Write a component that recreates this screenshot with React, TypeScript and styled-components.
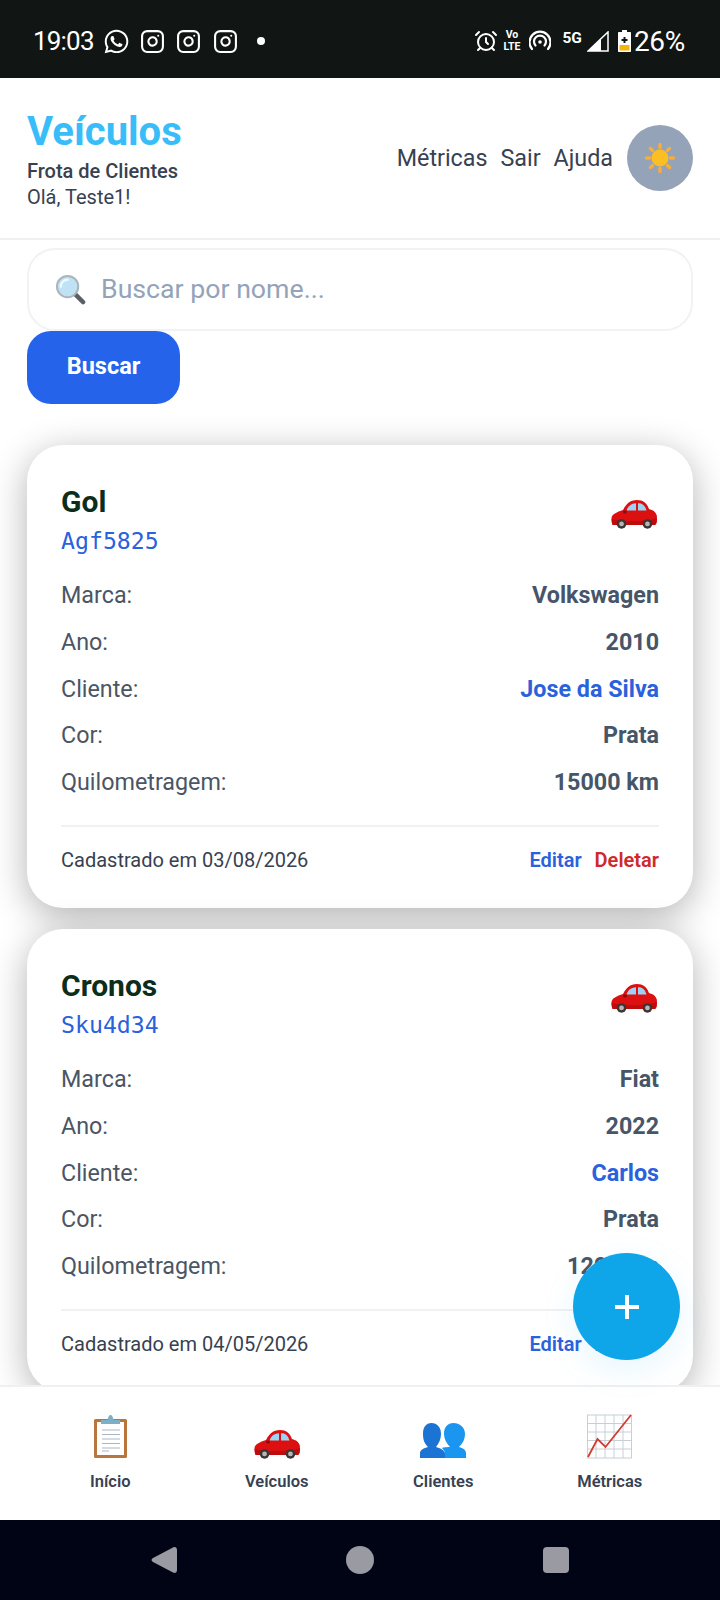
import React from 'react';
import styled, { createGlobalStyle } from 'styled-components';
import { FaWhatsapp } from 'react-icons/fa';
import { AlarmClock, Instagram } from 'lucide-react';

const GlobalStyle = createGlobalStyle`
    html, body {
        margin: 0;
        padding: 0;
        background: #fff;
        font-family: 'Roboto', 'Liberation Sans', sans-serif;
    }
    * { box-sizing: border-box; }
`;

const Screen = styled.div`
    position: relative;
    width: 720px;
    height: 1600px;
    display: flex;
    flex-direction: column;
    overflow: hidden;
    background: #fff;
`;

// Android status bar
const StatusBar = styled.div`
    height: 78px;
    flex: none;
    background: #111614;
    color: #fff;
    display: flex;
    align-items: center;
    justify-content: space-between;
    padding: 4px 35px 0 33px;
`;

const StatusGroup = styled.div`
    display: flex;
    align-items: center;
`;

// spacing for the status icons, which sit at uneven distances
const StatusSlot = styled.span<{ $left: number }>`
    display: flex;
    align-items: center;
    margin-left: ${(p) => p.$left}px;
`;

const Clock = styled.span`
    font-size: 26px;
    font-weight: 400;
    letter-spacing: -0.8px;
`;

const Dot = styled.span`
    width: 8px;
    height: 8px;
    margin-left: 19px;
    border-radius: 50%;
    background: #fff;
`;

const VoLte = styled.span`
    display: flex;
    flex-direction: column;
    align-items: center;
    font-size: 10.5px;
    font-weight: 700;
    line-height: 12.4px;
`;

const FiveG = styled.span`
    font-size: 15.5px;
    font-weight: 700;
    margin-top: -7px;
`;

const Percent = styled.span`
    font-size: 28px;
    font-weight: 400;
    letter-spacing: -0.3px;
`;

// App header
const Header = styled.header`
    height: 162px;
    flex: none;
    display: flex;
    align-items: center;
    justify-content: space-between;
    padding: 0 27px 0 27px;
    border-bottom: 2px solid #eef0f2;
`;

const Brand = styled.div`
    display: flex;
    flex-direction: column;
    margin-top: 4px;
`;

const BrandTitle = styled.h1`
    margin: 0;
    font-size: 40px;
    line-height: 46px;
    font-weight: 700;
    color: #38bdf8;
`;

const BrandSubtitle = styled.div`
    margin-top: 3px;
    font-size: 20px;
    line-height: 26px;
    font-weight: 500;
    color: #374151;
`;

const Greeting = styled.div`
    font-size: 20px;
    line-height: 27px;
    color: #374151;
`;

const HeaderNav = styled.nav`
    display: flex;
    align-items: center;
    gap: 13px;
`;

const HeaderLink = styled.a`
    font-size: 23.3px;
    color: #374151;
`;

const ThemeToggle = styled.div`
    width: 66px;
    height: 66px;
    margin-left: 1px;
    border-radius: 50%;
    background: #94a3b8;
    display: flex;
    align-items: center;
    justify-content: center;
`;

// Scrolling content
const Content = styled.main`
    flex: 1;
    min-height: 0;
    overflow: hidden;
    padding: 8px 27px 0;
`;

const SearchBox = styled.div`
    height: 83px;
    display: flex;
    align-items: center;
    gap: 15px;
    padding: 0 26px;
    border: 2px solid #f0f2f5;
    border-radius: 28px;
    background: #fff;
`;

const Placeholder = styled.span`
    font-size: 26.7px;
    color: #94a3b8;
    margin-bottom: 2px;
`;

const SearchButton = styled.button`
    display: block;
    width: 153px;
    height: 73px;
    padding: 0 0 3px;
    border: none;
    border-radius: 24px;
    background: #2563eb;
    color: #fff;
    font-family: inherit;
    font-size: 23.5px;
    font-weight: 700;
`;

const CardList = styled.div`
    margin-top: 41px;
    display: flex;
    flex-direction: column;
    gap: 21px;
`;

const Card = styled.article`
    height: 463px;
    flex: none;
    padding: 36px 34px 0;
    border-radius: 36px;
    background: #fff;
    box-shadow: 0 8px 36px rgba(0, 0, 0, 0.3);
`;

const CardTop = styled.div`
    display: flex;
    justify-content: space-between;
    align-items: flex-start;
    height: 91px;
`;

const CardTitle = styled.h2`
    margin: 0;
    font-size: 30px;
    line-height: 42px;
    font-weight: 700;
    color: #0b2d1a;
`;

const Plate = styled.div`
    font-family: 'DejaVu Sans Mono', 'Liberation Mono', monospace;
    font-size: 23.2px;
    line-height: 36px;
    color: #2a61dc;
`;

const CarSlot = styled.div`
    margin: 18px 2px 0 0;
    display: flex;
`;

const Row = styled.div`
    height: 46.7px;
    display: flex;
    align-items: center;
    justify-content: space-between;
    font-size: 23.3px;
    color: #4b5563;
`;

const RowValue = styled.span<{ $link?: boolean }>`
    font-weight: 700;
    color: ${(p) => (p.$link ? '#2a61dc' : '#475569')};
`;

const CardFooter = styled.div`
    margin-top: 20px;
    padding-top: 16px;
    border-top: 2px solid #f0f1f3;
    display: flex;
    align-items: center;
    justify-content: space-between;
    font-size: 20px;
    line-height: 34px;
    color: #374151;
`;

const Actions = styled.div`
    display: flex;
    gap: 13px;
`;

const ActionLink = styled.a<{ $danger?: boolean }>`
    font-size: 20px;
    font-weight: 600;
    color: ${(p) => (p.$danger ? '#cf2a2a' : '#2a61dc')};
`;

// Floating add button
const Fab = styled.button`
    position: absolute;
    left: 573px;
    top: 1253px;
    width: 107px;
    height: 107px;
    padding: 0;
    border: none;
    border-radius: 50%;
    background: #0ea5e9;
    box-shadow: 0 10px 34px rgba(14, 165, 233, 0.1);
    display: flex;
    align-items: center;
    justify-content: center;
`;

// Bottom tabs
const BottomNav = styled.nav`
    height: 135px;
    flex: none;
    display: grid;
    grid-template-columns: repeat(4, 1fr);
    padding: 0 27px;
    background: #fff;
    border-top: 2px solid #eef0f2;
`;

const Tab = styled.div`
    display: flex;
    flex-direction: column;
    align-items: center;
`;

const TabIcon = styled.div`
    height: 46px;
    margin-top: 26px;
    display: flex;
    align-items: flex-end;
`;

const TabLabel = styled.span`
    margin-top: 13px;
    font-size: 16.5px;
    line-height: 20px;
    font-weight: 600;
    color: #374151;
`;

// Android navigation keys
const SystemBar = styled.div`
    height: 80px;
    flex: none;
    background: #010414;
    display: flex;
    align-items: center;
    justify-content: space-between;
    padding: 0 151px;
`;

const HomeKey = styled.div`
    width: 28px;
    height: 28px;
    border-radius: 50%;
    background: #9a9aa2;
`;

const RecentKey = styled.div`
    width: 26px;
    height: 26px;
    border-radius: 4px;
    background: #9a9aa2;
`;

const CarIcon = ({ width = 46 }: { width?: number }) => (
    <svg width={width} height={width * 0.65} viewBox="0 0 46 30">
        <path d="M1 25C0 20 0 17 3 15C6 13 9 12 12 11C15 5 19 1 26 1C32 1 36 4 38 10C42 11 45 13 46 17C46 21 46 25 44 26H3C2 26 1.300 26 1 25Z" fill="#dc1010" />
        <path d="M0.500 20C10 23 36 23 46 19C46 22 46 25 44 26H3C2 26 1.300 26 1 25Z" fill="#bd0b0e" />
        <path d="M15.500 11.500C17 7 20 4.500 25 4.200V11.500Z" fill="#9bd3f5" />
        <path d="M27 4.200C31 4.200 34 6 35.500 11.500H27Z" fill="#9bd3f5" />
        <rect x="12" y="11.500" width="4" height="3" rx="1.500" fill="#8f0a0d" />
        <circle cx="10.500" cy="25" r="4.800" fill="#3c3535" />
        <circle cx="10.500" cy="25" r="2.400" fill="#b9b5b2" />
        <circle cx="36.500" cy="25" r="4.800" fill="#3c3535" />
        <circle cx="36.500" cy="25" r="2.400" fill="#b9b5b2" />
    </svg>
);

const SunIcon = () => (
    <svg width="32" height="32" viewBox="0 0 32 32">
        <g stroke="#f6ad3c" strokeWidth="3.500" strokeLinecap="round">
            <path d="M16 2.500V5.500M16 26.500V29.500M2.500 16H5.500M26.500 16H29.500M6.500 6.500L8.500 8.500M23.500 23.500L25.500 25.500M6.500 25.500L8.500 23.500M23.500 8.500L25.500 6.500" />
        </g>
        <circle cx="16" cy="16" r="8.500" fill="#fbbf24" />
    </svg>
);

const SearchIcon = () => (
    <svg width="31" height="31" viewBox="0 0 32 32">
        <path d="M20 20L29 29" stroke="#5b5f66" strokeWidth="4.500" strokeLinecap="round" />
        <circle cx="13" cy="13" r="11" fill="#bfe3f5" stroke="#a9b4bb" strokeWidth="2" />
        <path d="M6 13C6 9 9 6 13 6" stroke="#eef9ff" strokeWidth="2.500" fill="none" strokeLinecap="round" />
    </svg>
);

const ClipboardIcon = () => (
    <svg width="35" height="45" viewBox="0 0 35 45">
        <rect x="1" y="5" width="33" height="39" rx="1.500" fill="#b9763c" />
        <rect x="4" y="8" width="27" height="33" fill="#fff" />
        <path d="M9 16H27M9 20.500H27M9 25H27M9 29.500H27M9 34H27" stroke="#aab6c0" strokeWidth="1" />
        <path d="M9 37H16" stroke="#aab6c0" strokeWidth="1" />
        <path d="M8 10V6H14.500C15 3 16 1 17.500 1C19 1 20 3 20.500 6H27V10Z" fill="#7fafc4" />
    </svg>
);

const PeopleIcon = () => (
    <svg width="46" height="37" viewBox="0 0 46 37">
        <path d="M0 36V31C0 28 4 26 8 25C4 21 3 17 3 12C3 5 6 1 11.500 1C17 1 21 5 21 12C21 17 19 21 16 25C20 26 24 28 25 31V36Z" fill="#1b73d4" />
        <path d="M25 36V31C24.500 29 23 27 22 26C23 25.600 24 25.200 30 25C26.500 21 24 17 24 12C24 5 27.500 1 33.500 1C39.500 1 45 5 45 12C45 17 43 21 39 25C43 26 46 28 46 31V36Z" fill="#1a96f0" />
    </svg>
);

const ChartIcon = () => (
    <svg width="45" height="45" viewBox="0 0 45 45">
        <rect x="0.500" y="1" width="44" height="43" fill="#fff" stroke="#c6d0d6" />
        <path d="M9 1V44M18 1V44M27 1V44M36 1V44M0 9.500H45M0 18H45M0 26.500H45M0 35H45" stroke="#c6d0d6" strokeWidth="1" />
        <path d="M1 43L10.500 25L18.500 33L44 1" fill="none" stroke="#d33a32" strokeWidth="1.800" />
    </svg>
);

const HotspotIcon = () => (
    <svg width="22" height="22" viewBox="0 0 22 22" fill="none" stroke="#fff" strokeWidth="2.200" strokeLinecap="round">
        <circle cx="11" cy="12" r="1.800" fill="#fff" stroke="none" />
        <path d="M6.500 15.500A6 6 0 1 1 15.500 15.500" />
        <path d="M3 19A10.500 10.500 0 1 1 19 19" />
    </svg>
);

const SignalIcon = () => (
    <svg width="22" height="21" viewBox="0 0 22 21">
        <path d="M21 1V20H1Z" fill="none" stroke="#fff" strokeWidth="1.500" />
        <path d="M14 7.500V20H1Z" fill="#fff" />
    </svg>
);

const BatteryIcon = () => (
    <svg width="13" height="22" viewBox="0 0 13 22">
        <path d="M4 0H9V2H12C12.600 2 13 2.400 13 3V21C13 21.600 12.600 22 12 22H1C0.400 22 0 21.600 0 21V3C0 2.400 0.400 2 1 2H4Z" fill="#fff" />
        <rect x="1.500" y="15" width="10" height="5.500" fill="#f5b50a" />
        <path d="M6.500 7V13M3.500 10H9.500" stroke="#111614" strokeWidth="2" />
    </svg>
);

const BackKey = () => (
    <svg width="26" height="28" viewBox="0 0 26 28">
        <path d="M22 1.500C24 0.500 26 1.500 26 4V24C26 26.500 24 27.500 22 26.500L2 16C0 15 0 13 2 12Z" fill="#9a9aa2" />
    </svg>
);

const PlusIcon = () => (
    <svg width="26" height="26" viewBox="0 0 26 26">
        <path d="M13 1V25M1 13H25" stroke="#fff" strokeWidth="4" />
    </svg>
);

type Vehicle = {
    name: string;
    plate: string;
    brand: string;
    year: string;
    client: string;
    color: string;
    km: string;
    createdAt: string;
};

const vehicles: Vehicle[] = [
    { name: 'Gol', plate: 'Agf5825', brand: 'Volkswagen', year: '2010', client: 'Jose da Silva', color: 'Prata', km: '15000 km', createdAt: '03/08/2026' },
    { name: 'Cronos', plate: 'Sku4d34', brand: 'Fiat', year: '2022', client: 'Carlos', color: 'Prata', km: '1200 km', createdAt: '04/05/2026' },
];

const App = () => {
    return (
        <Screen>
            <GlobalStyle />
            <StatusBar>
                <StatusGroup>
                    <Clock>19:03</Clock>
                    <StatusSlot $left={9}><FaWhatsapp size={27} /></StatusSlot>
                    <StatusSlot $left={10}><Instagram size={25} strokeWidth={2} /></StatusSlot>
                    <StatusSlot $left={11.500}><Instagram size={25} strokeWidth={2} /></StatusSlot>
                    <StatusSlot $left={11.500}><Instagram size={25} strokeWidth={2} /></StatusSlot>
                    <Dot />
                </StatusGroup>
                <StatusGroup>
                    <AlarmClock size={24} strokeWidth={2} />
                    <StatusSlot $left={6}>
                        <VoLte>
                            <span>Vo</span>
                            <span>LTE</span>
                        </VoLte>
                    </StatusSlot>
                    <StatusSlot $left={9}><HotspotIcon /></StatusSlot>
                    <StatusSlot $left={11}><FiveG>5G</FiveG></StatusSlot>
                    <StatusSlot $left={5}><SignalIcon /></StatusSlot>
                    <StatusSlot $left={9}><BatteryIcon /></StatusSlot>
                    <StatusSlot $left={3}><Percent>26%</Percent></StatusSlot>
                </StatusGroup>
            </StatusBar>

            <Header>
                <Brand>
                    <BrandTitle>Veículos</BrandTitle>
                    <BrandSubtitle>Frota de Clientes</BrandSubtitle>
                    <Greeting>Olá, Teste1!</Greeting>
                </Brand>
                <HeaderNav>
                    <HeaderLink>Métricas</HeaderLink>
                    <HeaderLink>Sair</HeaderLink>
                    <HeaderLink>Ajuda</HeaderLink>
                    <ThemeToggle>
                        <SunIcon />
                    </ThemeToggle>
                </HeaderNav>
            </Header>

            <Content>
                <SearchBox>
                    <SearchIcon />
                    <Placeholder>Buscar por nome...</Placeholder>
                </SearchBox>
                <SearchButton>Buscar</SearchButton>
                <CardList>
                    {vehicles.map((v) => (
                        <Card key={v.plate}>
                            <CardTop>
                                <div>
                                    <CardTitle>{v.name}</CardTitle>
                                    <Plate>{v.plate}</Plate>
                                </div>
                                <CarSlot>
                                    <CarIcon />
                                </CarSlot>
                            </CardTop>
                            <Row>Marca:<RowValue>{v.brand}</RowValue></Row>
                            <Row>Ano:<RowValue>{v.year}</RowValue></Row>
                            <Row>Cliente:<RowValue $link>{v.client}</RowValue></Row>
                            <Row>Cor:<RowValue>{v.color}</RowValue></Row>
                            <Row>Quilometragem:<RowValue>{v.km}</RowValue></Row>
                            <CardFooter>
                                <span>Cadastrado em {v.createdAt}</span>
                                <Actions>
                                    <ActionLink>Editar</ActionLink>
                                    <ActionLink $danger>Deletar</ActionLink>
                                </Actions>
                            </CardFooter>
                        </Card>
                    ))}
                </CardList>
            </Content>

            <Fab aria-label="Adicionar">
                <PlusIcon />
            </Fab>

            <BottomNav>
                <Tab>
                    <TabIcon><ClipboardIcon /></TabIcon>
                    <TabLabel>Início</TabLabel>
                </Tab>
                <Tab>
                    <TabIcon><CarIcon /></TabIcon>
                    <TabLabel>Veículos</TabLabel>
                </Tab>
                <Tab>
                    <TabIcon><PeopleIcon /></TabIcon>
                    <TabLabel>Clientes</TabLabel>
                </Tab>
                <Tab>
                    <TabIcon><ChartIcon /></TabIcon>
                    <TabLabel>Métricas</TabLabel>
                </Tab>
            </BottomNav>

            <SystemBar>
                <BackKey />
                <HomeKey />
                <RecentKey />
            </SystemBar>
        </Screen>
    );
};

export default App;
